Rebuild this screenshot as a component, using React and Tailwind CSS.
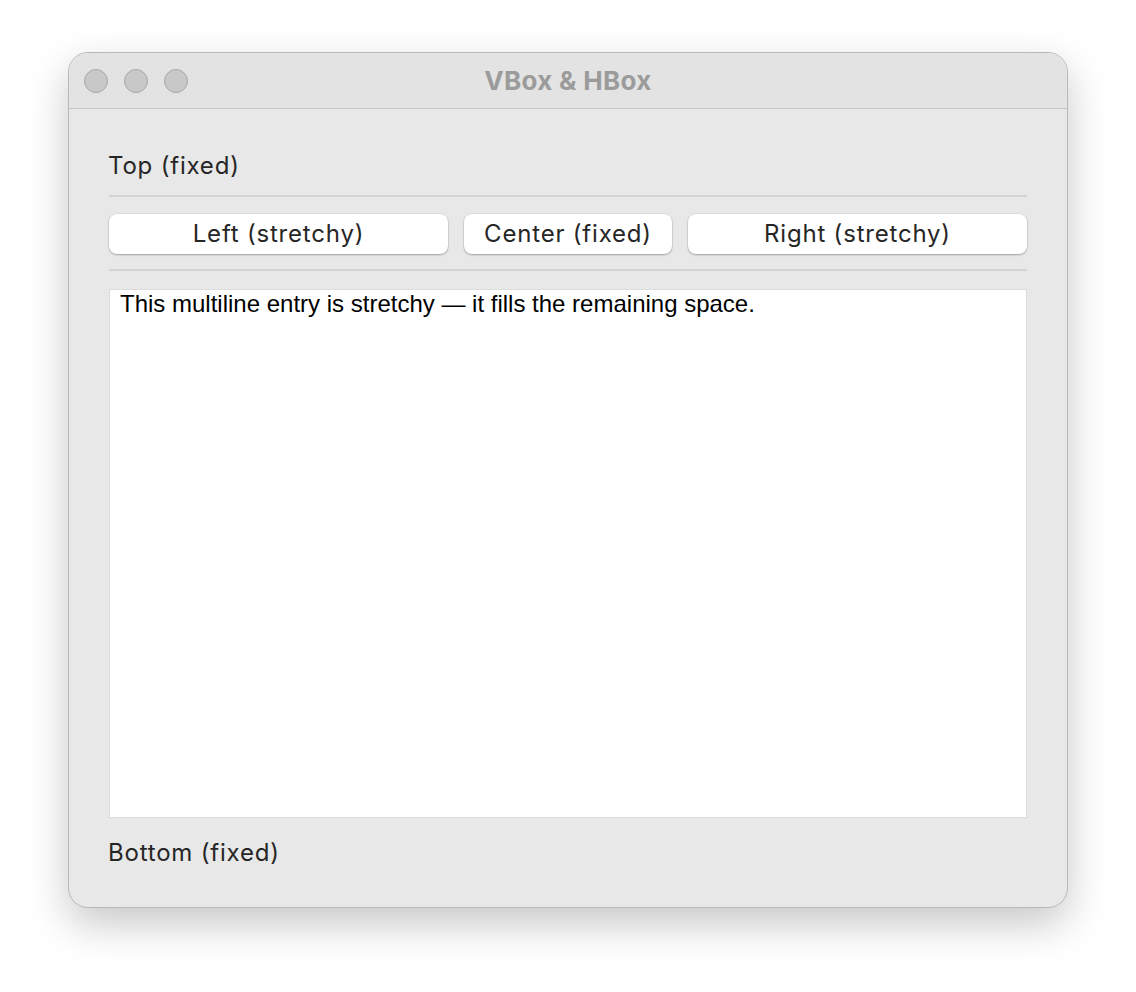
export default function App() {
  const ui = { fontFamily: "Inter, 'Noto Sans', sans-serif" };
  const btn =
    "h-[40px] rounded-[8px] bg-white text-[24px] tracking-[0.8px] text-[#262626] shadow-[0_1px_2px_rgba(0,0,0,0.28),0_0_0_0.5px_rgba(0,0,0,0.08)]";

  return (
    <div className="min-h-screen w-full bg-white pt-[52px] pl-[68px]">
      {/* Window */}
      <div
        className="w-[1000px] h-[856px] rounded-[20px] border border-[#b9b9b9] bg-[#e8e8e8] shadow-[0_16px_40px_rgba(0,0,0,0.22)] flex flex-col overflow-hidden"
        style={ui}
      >
        {/* Title bar */}
        <div className="relative h-[56px] shrink-0 bg-[#e3e3e3] border-b border-[#c6c6c6] flex items-center pl-[15px] gap-[16px]">
          <span className="w-[24px] h-[24px] rounded-full bg-[#c8c8c8] border border-[#a9a9a9]" />
          <span className="w-[24px] h-[24px] rounded-full bg-[#c8c8c8] border border-[#a9a9a9]" />
          <span className="w-[24px] h-[24px] rounded-full bg-[#c8c8c8] border border-[#a9a9a9]" />
          <div className="absolute inset-0 flex items-center justify-center pointer-events-none">
            <span className="text-[26px] font-bold text-[#9b9b9b] tracking-[0.3px]">VBox &amp; HBox</span>
          </div>
        </div>

        {/* Content */}
        <div className="flex-1 flex flex-col pl-[39px] pr-10 pt-[43px] pb-[40px]">
          <div className="h-[28px] leading-[28px] text-[24px] tracking-[0.8px] text-[#262626]">Top (fixed)</div>

          <div className="mt-[15px] ml-px h-[2px] bg-[#d3d3d3]" />

          {/* HBox */}
          <div className="mt-[17px] ml-px flex gap-[16px]">
            <button className={`flex-1 ${btn}`}>Left (stretchy)</button>
            <button className={`w-[208px] ${btn}`}>Center (fixed)</button>
            <button className={`flex-1 ${btn}`}>Right (stretchy)</button>
          </div>

          <div className="mt-[15px] ml-px h-[2px] bg-[#d3d3d3]" />

          {/* Multiline entry */}
          <div className="mt-[18px] ml-px flex-1 bg-white border border-[#dcdcdc] px-[10px] pt-0">
            <p
              className="text-[24px] leading-[28px] text-black"
              style={{ fontFamily: "'Liberation Sans', Arial, sans-serif" }}
            >
              This multiline entry is stretchy — it fills the remaining space.
            </p>
          </div>

          <div className="mt-[21px] h-[28px] leading-[28px] text-[24px] tracking-[0.8px] text-[#262626]">Bottom (fixed)</div>
        </div>
      </div>
    </div>
  );
}
